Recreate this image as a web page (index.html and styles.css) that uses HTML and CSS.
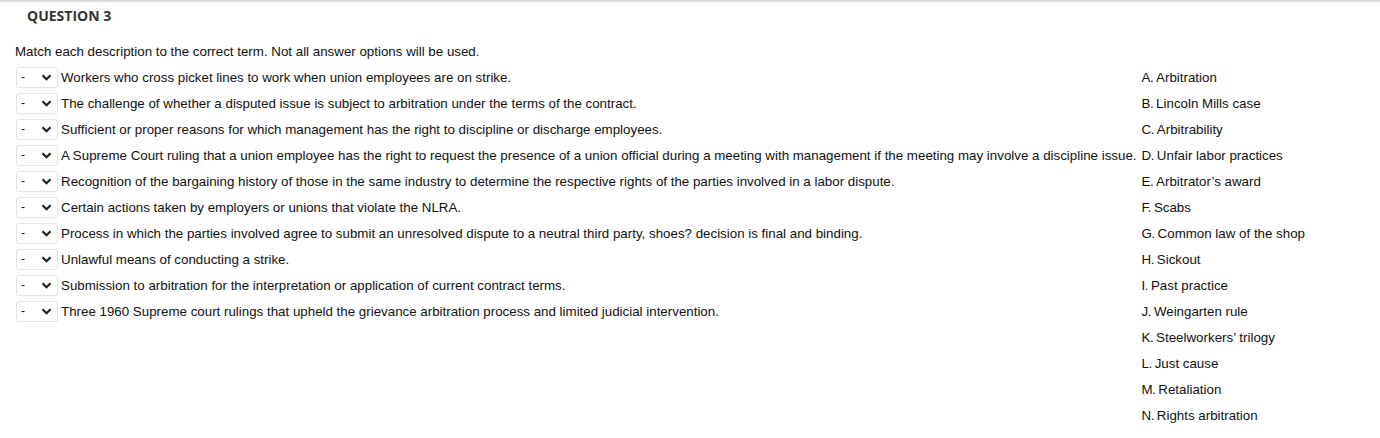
FILE: index.html
```html
<!DOCTYPE html>
<html>
<head>
<meta charset="utf-8">
<link rel="stylesheet" href="styles.css">
</head>
<body>
<div class="page">
  <div class="qhead">QUESTION 3</div>
  <div class="prompt">Match each description to the correct term. Not all answer options will be used.</div>
  <div class="grid">
    <div class="sel"><span>-</span><svg width="11" height="7" viewBox="0 0 11 7"><path d="M1.5 1.3 L5.5 5.3 L9.5 1.3" fill="none" stroke="#222" stroke-width="2.2"/></svg></div>
    <div class="desc">Workers who cross picket lines to work when union employees are on strike.</div>
    <div class="ans"><span class="lt">A.</span>Arbitration</div>

    <div class="sel"><span>-</span><svg width="11" height="7" viewBox="0 0 11 7"><path d="M1.5 1.3 L5.5 5.3 L9.5 1.3" fill="none" stroke="#222" stroke-width="2.2"/></svg></div>
    <div class="desc">The challenge of whether a disputed issue is subject to arbitration under the terms of the contract.</div>
    <div class="ans"><span class="lt">B.</span>Lincoln Mills case</div>

    <div class="sel"><span>-</span><svg width="11" height="7" viewBox="0 0 11 7"><path d="M1.5 1.3 L5.5 5.3 L9.5 1.3" fill="none" stroke="#222" stroke-width="2.2"/></svg></div>
    <div class="desc">Sufficient or proper reasons for which management has the right to discipline or discharge employees.</div>
    <div class="ans"><span class="lt">C.</span>Arbitrability</div>

    <div class="sel"><span>-</span><svg width="11" height="7" viewBox="0 0 11 7"><path d="M1.5 1.3 L5.5 5.3 L9.5 1.3" fill="none" stroke="#222" stroke-width="2.2"/></svg></div>
    <div class="desc">A Supreme Court ruling that a union employee has the right to request the presence of a union official during a meeting with management if the meeting may involve a discipline issue.</div>
    <div class="ans"><span class="lt">D.</span>Unfair labor practices</div>

    <div class="sel"><span>-</span><svg width="11" height="7" viewBox="0 0 11 7"><path d="M1.5 1.3 L5.5 5.3 L9.5 1.3" fill="none" stroke="#222" stroke-width="2.2"/></svg></div>
    <div class="desc">Recognition of the bargaining history of those in the same industry to determine the respective rights of the parties involved in a labor dispute.</div>
    <div class="ans"><span class="lt">E.</span>Arbitrator’s award</div>

    <div class="sel"><span>-</span><svg width="11" height="7" viewBox="0 0 11 7"><path d="M1.5 1.3 L5.5 5.3 L9.5 1.3" fill="none" stroke="#222" stroke-width="2.2"/></svg></div>
    <div class="desc">Certain actions taken by employers or unions that violate the NLRA.</div>
    <div class="ans"><span class="lt">F.</span>Scabs</div>

    <div class="sel"><span>-</span><svg width="11" height="7" viewBox="0 0 11 7"><path d="M1.5 1.3 L5.5 5.3 L9.5 1.3" fill="none" stroke="#222" stroke-width="2.2"/></svg></div>
    <div class="desc">Process in which the parties involved agree to submit an unresolved dispute to a neutral third party, shoes? decision is final and binding.</div>
    <div class="ans"><span class="lt">G.</span>Common law of the shop</div>

    <div class="sel"><span>-</span><svg width="11" height="7" viewBox="0 0 11 7"><path d="M1.5 1.3 L5.5 5.3 L9.5 1.3" fill="none" stroke="#222" stroke-width="2.2"/></svg></div>
    <div class="desc">Unlawful means of conducting a strike.</div>
    <div class="ans"><span class="lt">H.</span>Sickout</div>

    <div class="sel"><span>-</span><svg width="11" height="7" viewBox="0 0 11 7"><path d="M1.5 1.3 L5.5 5.3 L9.5 1.3" fill="none" stroke="#222" stroke-width="2.2"/></svg></div>
    <div class="desc">Submission to arbitration for the interpretation or application of current contract terms.</div>
    <div class="ans"><span class="lt">I.</span>Past practice</div>

    <div class="sel"><span>-</span><svg width="11" height="7" viewBox="0 0 11 7"><path d="M1.5 1.3 L5.5 5.3 L9.5 1.3" fill="none" stroke="#222" stroke-width="2.2"/></svg></div>
    <div class="desc">Three 1960 Supreme court rulings that upheld the grievance arbitration process and limited judicial intervention.</div>
    <div class="ans"><span class="lt">J.</span>Weingarten rule</div>

    <div class="empty"></div><div class="empty"></div>
    <div class="ans"><span class="lt">K.</span>Steelworkers’ trilogy</div>
    <div class="empty"></div><div class="empty"></div>
    <div class="ans"><span class="lt">L.</span>Just cause</div>
    <div class="empty"></div><div class="empty"></div>
    <div class="ans"><span class="lt">M.</span>Retaliation</div>
    <div class="empty"></div><div class="empty"></div>
    <div class="ans"><span class="lt">N.</span>Rights arbitration</div>
  </div>
</div>
</body>
</html>
```

FILE: styles.css
```css
html, body {
  margin: 0;
  padding: 0;
  background: #fff;
}
.page {
  border-top: 2px solid #d9d9d9;
  font-family: "Liberation Sans", Arial, sans-serif;
  font-size: 13.33px;
  color: #111;
}
.qhead {
  font-family: "Open Sans", sans-serif;
  font-weight: 700;
  font-size: 14px;
  color: #333;
  padding: 4px 0 0 27px;
  line-height: 20px;
}
.prompt {
  padding: 18px 0 0 15px;
  line-height: 16px;
}
.grid {
  display: grid;
  grid-template-columns: 42px max-content max-content;
  grid-auto-rows: 26px;
  column-gap: 3px;
  padding: 0 0 0 16px;
  margin-top: 4px;
  align-items: center;
}
.sel {
  box-sizing: border-box;
  height: 21px;
  border: 1px solid #e3e3e3;
  border-radius: 3px;
  display: flex;
  align-items: center;
  justify-content: space-between;
  padding: 0 5px 0 4px;
  font-size: 12px;
}
.sel svg {
  display: block;
}
.desc {
  white-space: nowrap;
  padding-right: 2px;
}
.ans {
  white-space: nowrap;
}
.lt {
  margin-right: 3px;
  letter-spacing: -0.5px;
}
```
